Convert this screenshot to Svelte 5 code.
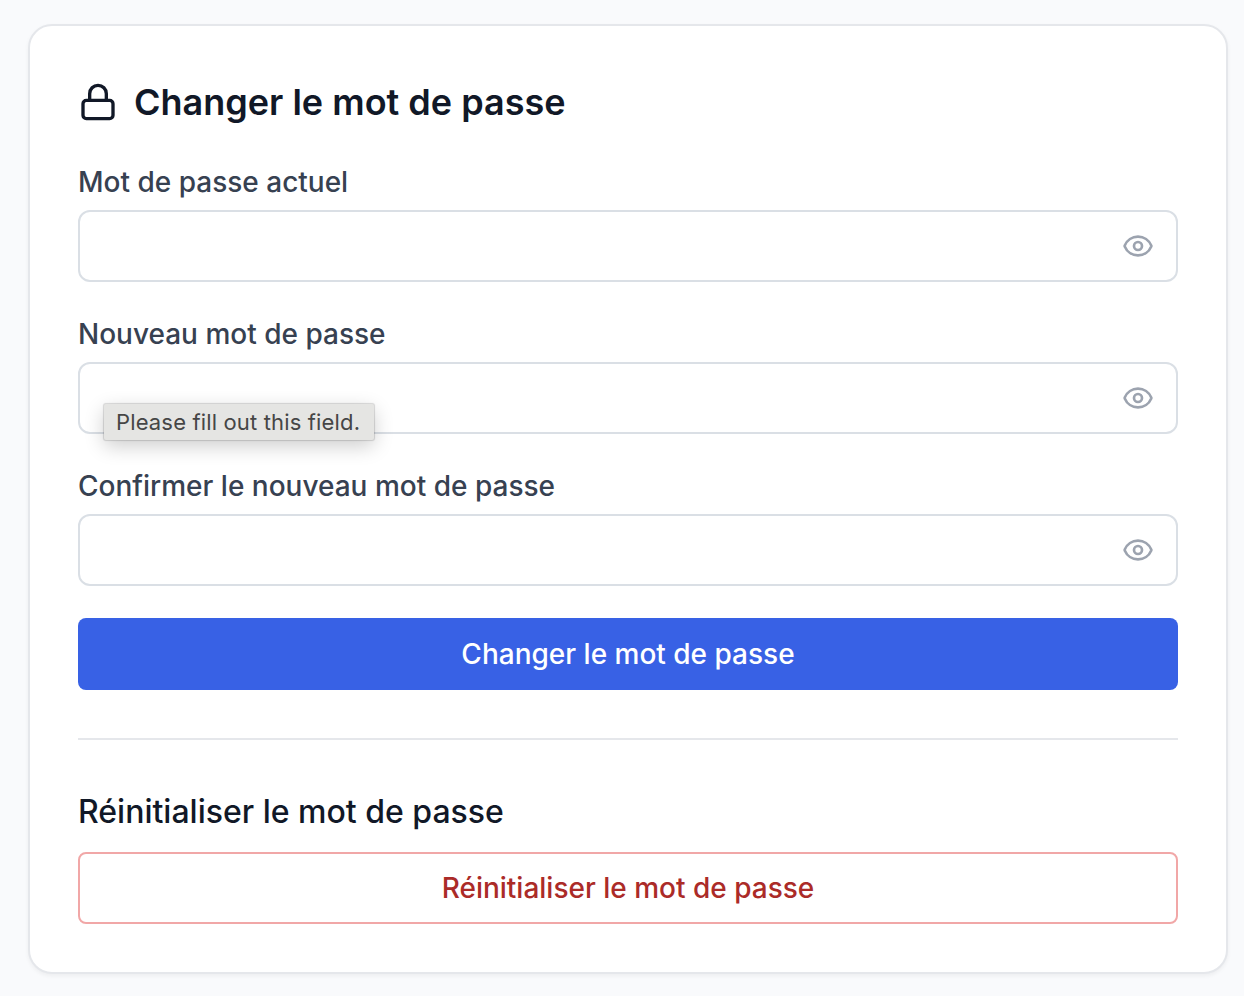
<script>
  const fields = [
    { label: 'Mot de passe actuel' },
    { label: 'Nouveau mot de passe', hint: 'Please fill out this field.' },
    { label: 'Confirmer le nouveau mot de passe' }
  ];
</script>

<main>
  <section class="card">
    <h2>
      <svg class="lock" viewBox="0 0 24 24" aria-hidden="true">
        <rect x="3" y="11" width="18" height="11" rx="2" />
        <path d="M7 11V7a5 5 0 0 1 10 0v4" />
      </svg>
      <span>Changer le mot de passe</span>
    </h2>
    {#each fields as field, i}
      <div class="field">
        <label for="f{i}">{field.label}</label>
        <div class="control">
          <input id="f{i}" type="password" />
          <svg class="eye" viewBox="0 0 24 24" aria-hidden="true">
            <path d="M2.062 12.348a1 1 0 0 1 0-.696 10.75 10.75 0 0 1 19.876 0 1 1 0 0 1 0 .696 10.75 10.75 0 0 1-19.876 0" />
            <circle cx="12" cy="12" r="3" />
          </svg>
          {#if field.hint}<span class="tip">{field.hint}</span>{/if}
        </div>
      </div>
    {/each}
    <button class="primary">Changer le mot de passe</button>
    <div class="reset">
      <h3>Réinitialiser le mot de passe</h3>
      <button class="danger">Réinitialiser le mot de passe</button>
    </div>
  </section>
</main>

<style>
  :global(body) { background: #f9fafc; }
  main { padding: 24px 16px 22px 28px; font-family: Inter, sans-serif; }
  .card { box-sizing: border-box; width: 1200px; height: 950px; padding: 48px; border: 2px solid #e5e7eb; border-radius: 24px; background: #fff; box-shadow: 0 2px 4px rgba(0,0,0,.05); }
  h2 { display: flex; align-items: center; gap: 16px; height: 56px; margin: 0 0 32px; color: #111827; font-size: 36px; font-weight: 600; line-height: 56px; }
  svg { fill: none; stroke-width: 2; stroke-linecap: round; stroke-linejoin: round; }
  .lock { width: 40px; height: 40px; stroke: currentColor; }
  .field { margin-bottom: 32px; }
  label { display: block; height: 40px; margin-bottom: 8px; color: #374151; font-size: 28px; font-weight: 500; line-height: 40px; }
  .control { position: relative; height: 72px; }
  input { box-sizing: border-box; display: block; width: 100%; height: 72px; border: 2px solid #dadfe5; border-radius: 12px; background: #fff; outline: none; }
  .eye { position: absolute; right: 24px; top: 20px; width: 32px; height: 32px; stroke: #9ca3af; }
  .tip { position: absolute; left: 26px; top: 42px; box-sizing: border-box; width: 270px; height: 36px; padding-left: 12px; border-radius: 2px; background: #e5e5e3; color: #464646; font-size: 22px; line-height: 36px; letter-spacing: .15px; white-space: nowrap; box-shadow: 0 0 1px 1px rgba(0,0,0,.14), 0 6px 20px rgba(0,0,0,.2); }
  button { display: block; box-sizing: border-box; width: 100%; height: 72px; border-radius: 8px; font: 500 28px/40px Inter, sans-serif; }
  .primary { border: 0; background: #3861e5; color: #fff; }
  .reset { margin-top: 48px; padding-top: 48px; border-top: 2px solid #e5e7eb; }
  h3 { margin: 0 0 16px; color: #111827; font-size: 32px; font-weight: 500; line-height: 48px; }
  .danger { border: 2px solid #f1a7a7; background: #fff; color: #ab2b28; }
</style>
